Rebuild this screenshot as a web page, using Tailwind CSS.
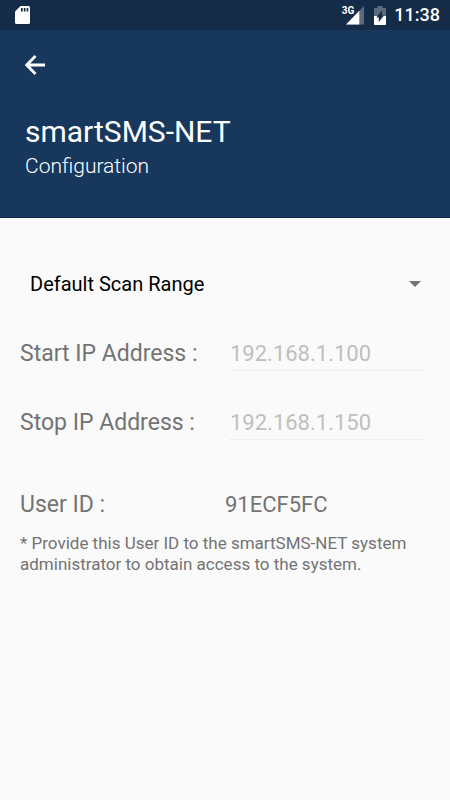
<!DOCTYPE html>
<html lang="en">
<head>
<meta charset="utf-8">
<meta name="viewport" content="width=device-width, initial-scale=1">
<title>smartSMS-NET Configuration</title>
<script src="https://cdn.jsdelivr.net/npm/@tailwindcss/browser@4"></script>
</head>
<body class="min-h-screen bg-[#fafafa] font-[Roboto,sans-serif] text-[#737373]">
  <div class="flex h-[30px] items-center justify-between bg-[#142c47] pr-[10px] pl-[15px] text-white">
    <svg class="h-5 w-4" viewBox="0 0 16 20" aria-label="SD card" role="img">
      <path fill="#fff" d="M5.500 1H13.500Q15 1 15 2.500V17.500Q15 19 13.500 19H1.500Q0 19 0 17.500V6.500Z"/>
      <path fill="#142c47" d="M6 3h1.700v3.500H6zM8.800 3h1.700v3.500H8.800zM11.600 3h1.700v3.500h-1.700z"/>
    </svg>
    <div class="flex items-center">
      <div class="flex items-start">
        <span class="-mr-2 text-[10px] leading-[10px] font-bold">3G</span>
        <svg class="h-[19px] w-[18px]" viewBox="0 0 18 19" aria-label="Signal" role="img">
          <path fill="#5b6b7e" d="M18 0V18.500H0Z"/>
          <path fill="#fff" d="M13.300 4.800V18.500H0Z"/>
        </svg>
      </div>
      <svg class="ml-[10px] h-[19px] w-3" viewBox="0 0 12 19" aria-label="Battery charging" role="img">
        <path fill="#5b6b7e" d="M3.500 0h5v2H11q1 0 1 1v7H0V3q0-1 1-1h2.500z"/>
        <path fill="#fff" d="M0 10h12v8q0 1-1 1H1q-1 0-1-1z"/>
        <path fill="#142c47" d="M8 4.500V9.500H10L4.800 16V11.500H2.300Z"/>
      </svg>
      <span class="ml-2 text-[18px] leading-6 font-medium">11:38</span>
    </div>
  </div>

  <header class="border-b border-[#0d2442] bg-[#18375d] px-[25px] pt-[25px] pb-[37px] text-white">
    <button type="button" aria-label="Back" class="block">
      <svg class="h-5 w-5" viewBox="0 0 20 20" fill="none" stroke="#fff" stroke-width="2.800"><path d="M20 10H2M10.500 1L1.700 10L10.500 19"/></svg>
    </button>
    <h1 class="mt-[39px] text-[30px] leading-9 font-normal">smartSMS-NET</h1>
    <p class="mt-[2px] text-[21px] leading-7 font-light">Configuration</p>
  </header>

  <main class="px-5 pt-[46px]">
    <div class="relative">
      <select aria-label="Scan range" class="h-10 w-full appearance-none bg-transparent pr-10 pl-[10px] text-[20px] leading-6 text-black">
        <option>Default Scan Range</option>
      </select>
      <svg class="pointer-events-none absolute top-[17px] right-[9px] h-[6px] w-3" viewBox="0 0 12 6"><path fill="#737373" d="M0 0H12L6 6Z"/></svg>
    </div>

    <form class="mt-[33px] grid gap-[35px]">
      <div class="grid grid-cols-2 items-center">
        <label for="start" class="text-[23px] leading-8">Start IP Address :</label>
        <input id="start" type="text" disabled value="192.168.1.100" class="mr-[6px] ml-1 h-[34px] min-w-0 border-b border-[#efefef] pl-px text-[22px] leading-8 text-[#bfbfbf]">
      </div>
      <div class="grid grid-cols-2 items-center">
        <label for="stop" class="text-[23px] leading-8">Stop IP Address :</label>
        <input id="stop" type="text" disabled value="192.168.1.150" class="mr-[6px] ml-1 h-[34px] min-w-0 border-b border-[#efefef] pl-px text-[22px] leading-8 text-[#bfbfbf]">
      </div>
    </form>

    <dl class="mt-[49px] grid grid-cols-2 leading-8">
      <dt class="text-[23px]">User ID :</dt>
      <dd class="text-[22px]">91ECF5FC</dd>
    </dl>
    <p class="mt-3 text-[17px] leading-[21px]">* Provide this User ID to the smartSMS-NET system administrator to obtain access to the system.</p>
  </main>
</body>
</html>
